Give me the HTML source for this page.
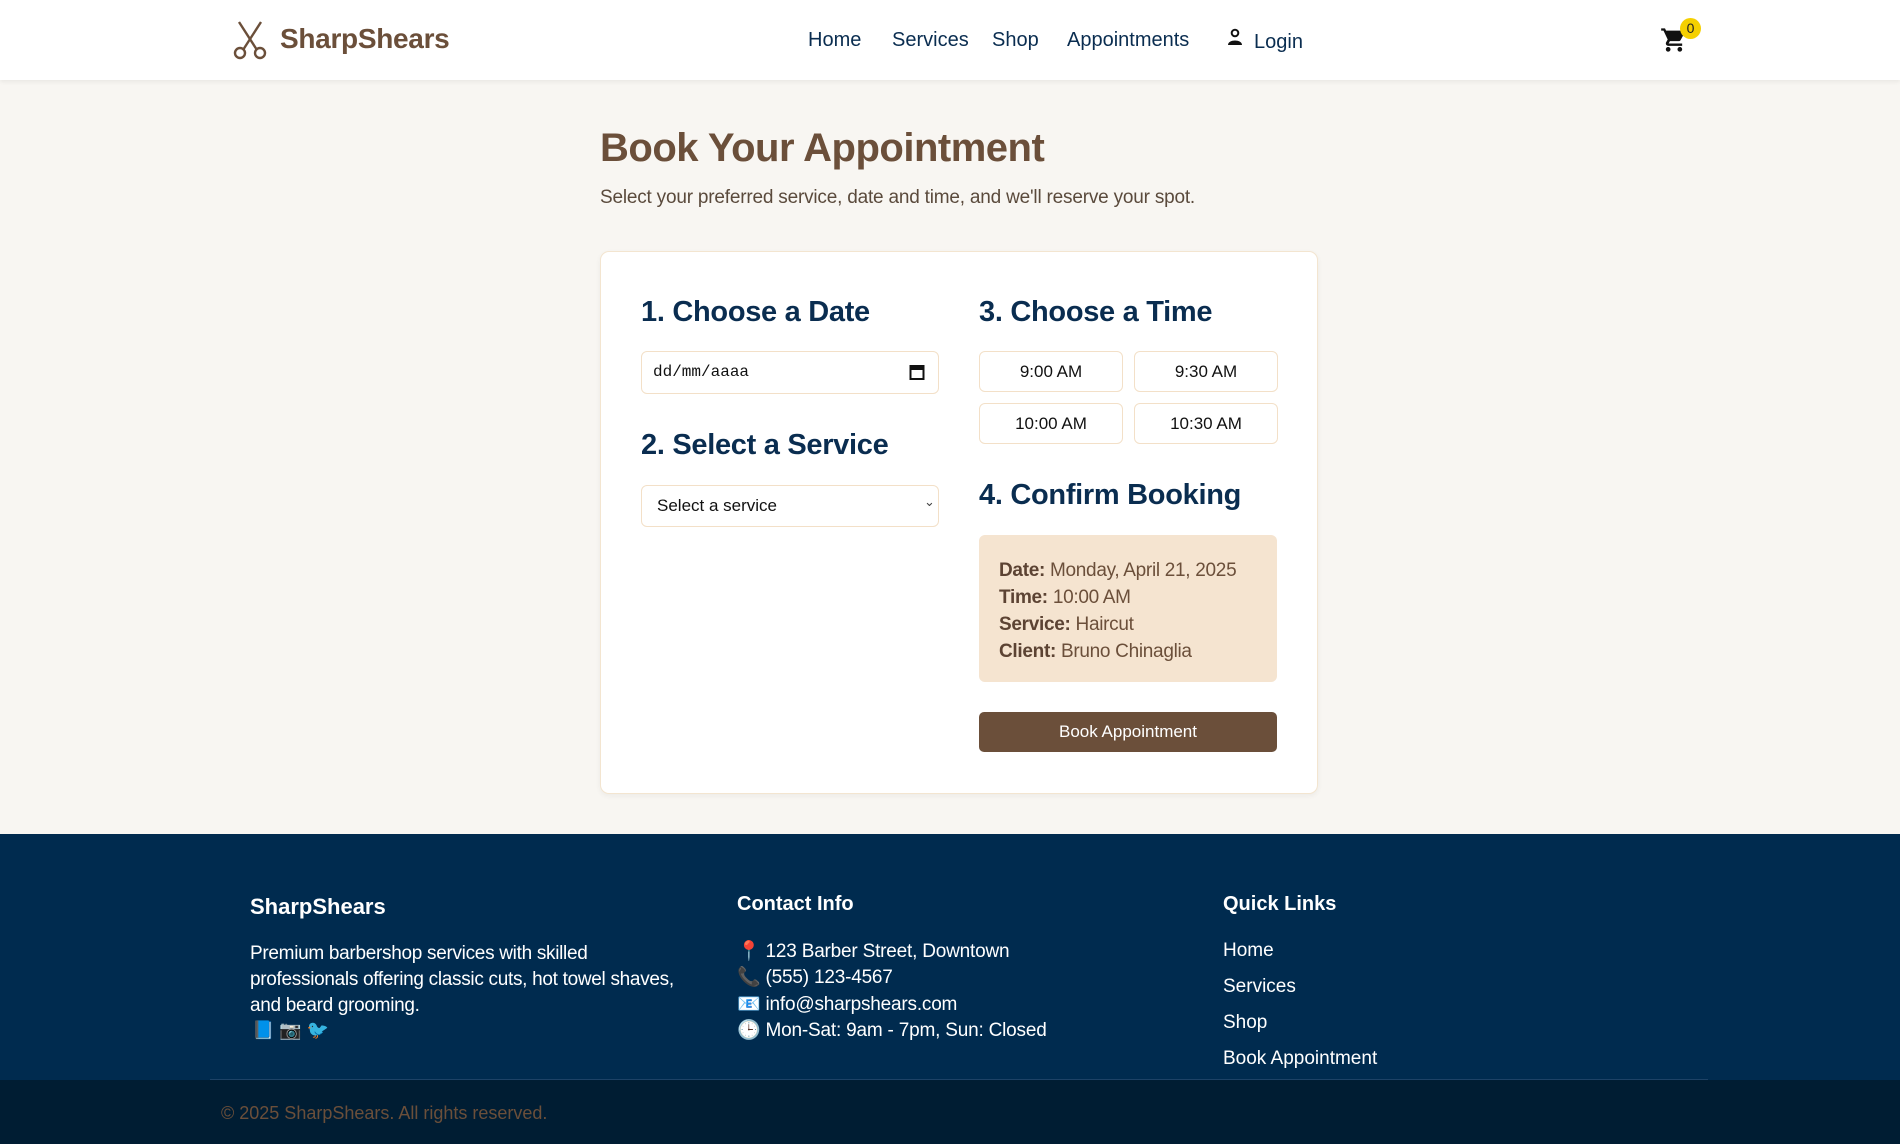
<!DOCTYPE html>
<html><head><meta charset="utf-8"><style>
*{box-sizing:border-box;margin:0;padding:0}
body{width:1900px;height:1144px;overflow:hidden;background:#f8f6f2;font-family:"Liberation Sans",Arial,sans-serif;position:relative}
.a{position:absolute;white-space:nowrap}
header{position:absolute;left:0;top:0;width:1900px;height:80px;background:#fff;box-shadow:0 2px 4px rgba(0,0,0,.06)}
.nav{font-size:20px;color:#0a2d50;top:27px}
.card{position:absolute;left:600px;top:251px;width:718px;height:543px;background:#fff;border:1px solid #f3e5d0;border-radius:9px;box-shadow:0 2px 6px rgba(0,0,0,.05)}
h2{position:absolute;font-size:29px;font-weight:bold;color:#0a2d50;white-space:nowrap;letter-spacing:-0.3px}
.box{position:absolute;border:1px solid #f3e0c8;border-radius:6px;background:#fff}
.tb{position:absolute;border:1px solid #f3e0c8;border-radius:6px;background:#fff;width:144px;height:41px;font-size:17px;text-align:center;line-height:39px;color:#111}
.conf{position:absolute;left:979px;top:535px;width:298px;height:147px;background:#f5e4d0;border-radius:6px;padding:22px 20px;font-size:19px;line-height:27px;color:#6b4f3a;white-space:nowrap;letter-spacing:-0.3px}
.conf b{color:#5c4333}
footer{position:absolute;left:0;top:834px;width:1900px;height:246px;background:#002b4f}
.bot{position:absolute;left:0;top:1080px;width:1900px;height:64px;background:#001d33}
.f{color:#fff;font-size:19px}
</style></head><body>
<header>
<svg class="a" style="left:231px;top:20px" width="38" height="40" viewBox="0 0 38 40" fill="none" stroke="#6b4f3a" stroke-width="2.4"><path d="M8 2 L26 30 M30 2 L12 30"/><circle cx="9" cy="33" r="5"/><circle cx="29" cy="33" r="5"/></svg>
<div class="a" style="left:280px;top:23px;font-size:28px;font-weight:bold;color:#6b4f3a;letter-spacing:-0.3px">SharpShears</div>
<div class="a nav" style="left:808px;top:29px">Home</div>
<div class="a nav" style="left:892px;top:29px">Services</div>
<div class="a nav" style="left:992px;top:29px">Shop</div>
<div class="a nav" style="left:1067px;top:29px">Appointments</div>
<svg class="a" style="left:1226px;top:28px" width="18" height="18" viewBox="0 0 18 18" fill="#111"><circle cx="9" cy="5" r="3.3" fill="none" stroke="#111" stroke-width="2"/><path d="M2 17 C2 11 16 11 16 17 Z"/></svg>
<div class="a nav" style="left:1254px;top:31px">Login</div>
<svg class="a" style="left:1660px;top:26px" width="28" height="28" viewBox="0 0 24 24" fill="#111"><path d="M7 18c-1.1 0-2 .9-2 2s.9 2 2 2 2-.9 2-2-.9-2-2-2zM1 2v2h2l3.6 7.6L5.2 14c-.1.3-.2.6-.2 1 0 1.1.9 2 2 2h12v-2H7.4l1.1-2h7.5c.8 0 1.4-.4 1.7-1l3.6-6.5L19.6 4H5.2l-.9-2H1zm16 16c-1.1 0-2 .9-2 2s.9 2 2 2 2-.9 2-2-.9-2-2-2z"/></svg>
<div class="a" style="left:1680px;top:18px;width:21px;height:21px;border-radius:50%;background:#f5d000;font-size:14px;text-align:center;line-height:21px;color:#222">0</div>
</header>
<div class="a" style="left:600px;top:126px;font-size:40px;font-weight:bold;color:#6b4f3a;letter-spacing:-0.5px">Book Your Appointment</div>
<div class="a" style="left:600px;top:187px;font-size:19px;color:#5a4a3c;letter-spacing:-0.2px">Select your preferred service, date and time, and we'll reserve your spot.</div>
<div class="card"></div>
<h2 style="left:641px;top:296px">1. Choose a Date</h2>
<div class="box" style="left:641px;top:351px;width:298px;height:43px"></div>
<div class="a" style="left:653px;top:363px;font-family:'Liberation Mono',monospace;font-size:16px;color:#111">dd/mm/aaaa</div>
<svg class="a" style="left:909px;top:363px" width="16" height="18" viewBox="0 0 16 18"><rect x="1.5" y="3" width="13" height="13" fill="none" stroke="#111" stroke-width="2"/><rect x="1.5" y="3" width="13" height="4" fill="#111"/></svg>
<h2 style="left:641px;top:429px">2. Select a Service</h2>
<div class="box" style="left:641px;top:485px;width:298px;height:42px"></div>
<div class="a" style="left:657px;top:496px;font-size:17px;color:#111">Select a service</div>
<div class="a" style="left:924px;top:494px;font-size:13px;color:#444">&#8964;</div>
<h2 style="left:979px;top:296px">3. Choose a Time</h2>
<div class="tb" style="left:979px;top:351px">9:00 AM</div>
<div class="tb" style="left:1134px;top:351px">9:30 AM</div>
<div class="tb" style="left:979px;top:403px">10:00 AM</div>
<div class="tb" style="left:1134px;top:403px">10:30 AM</div>
<h2 style="left:979px;top:479px">4. Confirm Booking</h2>
<div class="conf"><b>Date:</b> Monday, April 21, 2025<br><b>Time:</b> 10:00 AM<br><b>Service:</b> Haircut<br><b>Client:</b> Bruno Chinaglia</div>
<div class="a" style="left:979px;top:712px;width:298px;height:40px;background:#6b4f3a;border-radius:5px;color:#fff;font-size:17px;text-align:center;line-height:40px">Book Appointment</div>
<footer></footer>
<div class="a" style="left:210px;top:1079px;width:1498px;height:1px;background:#1d4266"></div>
<div class="bot"></div>
<div class="a f" style="left:250px;top:894px;font-size:22px;font-weight:bold">SharpShears</div>
<div class="a f" style="left:250px;top:941px;line-height:26px;white-space:normal;width:450px;letter-spacing:-0.3px">Premium barbershop services with skilled professionals offering classic cuts, hot towel shaves, and beard grooming.</div>
<div class="a" style="left:252px;top:1020px;font-size:18px">📘 📷 🐦</div>
<div class="a f" style="left:737px;top:893px;font-size:20px;font-weight:bold">Contact Info</div>
<div class="a f" style="left:737px;top:939px;line-height:26.3px;letter-spacing:-0.2px">📍 123 Barber Street, Downtown<br>📞 (555) 123-4567<br>📧 info@sharpshears.com<br>🕒 Mon-Sat: 9am - 7pm, Sun: Closed</div>
<div class="a f" style="left:1223px;top:893px;font-size:20px;font-weight:bold">Quick Links</div>
<div class="a f" style="left:1223px;top:940px">Home</div>
<div class="a f" style="left:1223px;top:976px">Services</div>
<div class="a f" style="left:1223px;top:1012px">Shop</div>
<div class="a f" style="left:1223px;top:1048px">Book Appointment</div>
<div class="a" style="left:221px;top:1103px;font-size:18px;color:#6b4f3a">© 2025 SharpShears. All rights reserved.</div>
</body></html>
